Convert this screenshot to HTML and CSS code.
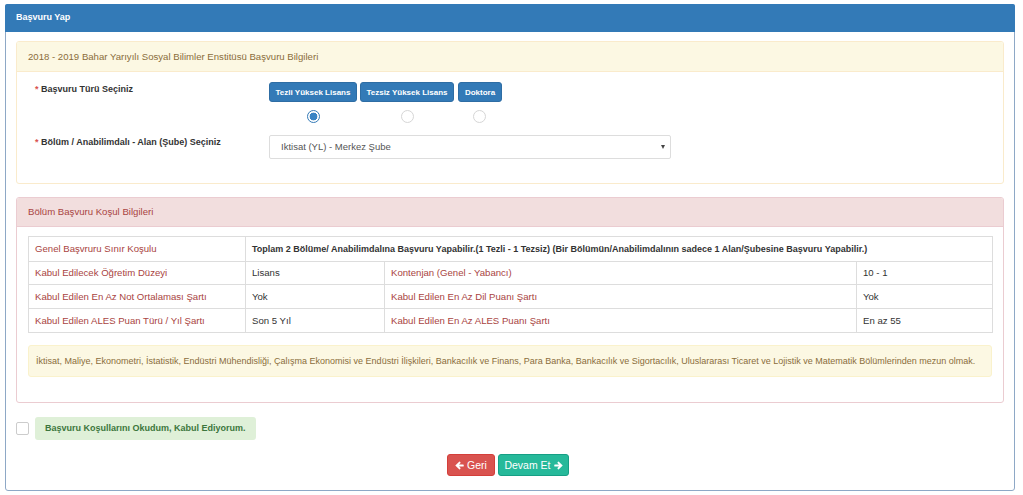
FILE: index.html
```html
<!DOCTYPE html>
<html lang="tr">
<head>
<meta charset="utf-8">
<title>Başvuru Yap</title>
<link rel="stylesheet" href="styles.css">
</head>
<body>
<div class="panel panel-primary">
  <div class="panel-heading">Başvuru Yap</div>
  <div class="panel-body main">
    <div class="panel panel-warning">
      <div class="panel-heading">2018 - 2019 Bahar Yarıyılı Sosyal Bilimler Enstitüsü Başvuru Bilgileri</div>
      <div class="panel-body form">
        <div class="form-row">
          <label class="control-label"><span class="req">*</span> Başvuru Türü Seçiniz</label>
          <div class="types">
            <div class="type t1">
              <button class="btn btn-primary btn-xs">Tezli Yüksek Lisans</button>
              <span class="radio checked"></span>
            </div>
            <div class="type t2">
              <button class="btn btn-primary btn-xs">Tezsiz Yüksek Lisans</button>
              <span class="radio"></span>
            </div>
            <div class="type t3">
              <button class="btn btn-primary btn-xs">Doktora</button>
              <span class="radio"></span>
            </div>
          </div>
        </div>
        <div class="form-row">
          <label class="control-label"><span class="req">*</span> Bölüm / Anabilimdalı - Alan (Şube) Seçiniz</label>
          <div class="select"><span>Iktisat (YL) - Merkez Şube</span><span class="caret"></span></div>
        </div>
      </div>
    </div>

    <div class="panel panel-danger">
      <div class="panel-heading">Bölüm Başvuru Koşul Bilgileri</div>
      <div class="panel-body">
        <table class="table">
          <colgroup><col class="c1"><col class="c2"><col class="c3"><col class="c4"></colgroup>
          <tr class="r1"><th>Genel Başvruru Sınır Koşulu</th><td colspan="3" class="strong">Toplam 2 Bölüme/ Anabilimdalına Başvuru Yapabilir.(1 Tezli - 1 Tezsiz) (Bir Bölümün/Anabilimdalının sadece 1 Alan/Şubesine Başvuru Yapabilir.)</td></tr>
          <tr class="r2"><th>Kabul Edilecek Öğretim Düzeyi</th><td>Lisans</td><th>Kontenjan (Genel - Yabancı)</th><td>10 - 1</td></tr>
          <tr><th>Kabul Edilen En Az Not Ortalaması Şartı</th><td>Yok</td><th>Kabul Edilen En Az Dil Puanı Şartı</th><td>Yok</td></tr>
          <tr><th>Kabul Edilen ALES Puan Türü / Yıl Şartı</th><td>Son 5 Yıl</td><th>Kabul Edilen En Az ALES Puanı Şartı</th><td>En az 55</td></tr>
        </table>
        <div class="well">İktisat, Maliye, Ekonometri, İstatistik, Endüstri Mühendisliği, Çalışma Ekonomisi ve Endüstri İlişkileri, Bankacılık ve Finans, Para Banka, Bankacılık ve Sigortacılık, Uluslararası Ticaret ve Lojistik ve Matematik Bölümlerinden mezun olmak.</div>
      </div>
    </div>

    <div class="accept">
      <span class="checkbox"></span>
      <div class="alert-success">Başvuru Koşullarını Okudum, Kabul Ediyorum.</div>
    </div>

    <div class="actions">
      <button class="btn btn-danger"><svg class="ico" viewBox="0 0 10 10"><path d="M0.3 5 L4.6 0.9 Q5.3 0.4 5.8 1 L6 1.3 Q6.4 1.9 5.9 2.4 L4.4 3.8 H9 Q9.7 3.8 9.7 4.5 V5.5 Q9.7 6.2 9 6.2 H4.4 L5.9 7.6 Q6.4 8.1 6 8.7 L5.8 9 Q5.3 9.6 4.6 9.1 Z"/></svg>Geri</button>
      <button class="btn btn-success">Devam Et<svg class="ico right" viewBox="0 0 10 10"><path d="M9.7 5 L5.4 0.9 Q4.7 0.4 4.2 1 L4 1.3 Q3.6 1.9 4.1 2.4 L5.6 3.8 H1 Q0.3 3.8 0.3 4.5 V5.5 Q0.3 6.2 1 6.2 H5.6 L4.1 7.6 Q3.6 8.1 4 8.7 L4.2 9 Q4.7 9.6 5.4 9.1 Z"/></svg></button>
    </div>
  </div>
</div>
</body>
</html>
```

FILE: styles.css
```css
* { box-sizing: border-box; }
html, body { margin: 0; padding: 0; background: #fff; }
body {
  font-family: "Liberation Sans", Arial, sans-serif;
  font-size: 9.6px;
  line-height: 1.42857;
  color: #333;
}
.panel {
  background: #fff;
  border: 1px solid transparent;
  border-radius: 3px;
}
.panel-heading {
  border-bottom: 1px solid transparent;
  border-radius: 2px 2px 0 0;
}
.panel-primary {
  margin: 4px 0 0 5px;
  width: 1010px;
  border-color: #8ea8c6;
}
.panel-primary > .panel-heading {
  background: #337ab7;
  border-color: #337ab7;
  color: #fff;
  font-weight: bold;
  font-size: 9px;
  height: 28px;
  padding: 0 11px;
  display: flex;
  align-items: center;
  margin: -1px -1px 0;
}
.main { padding: 9px 10px 14px; }

.panel-warning { border-color: #faebcc; }
.panel-warning > .panel-heading {
  background: #fcf8e3;
  color: #8a6d3b;
  border-color: #faebcc;
  height: 30px;
  padding: 0 11px;
  display: flex;
  align-items: center;
}
.panel-danger { border-color: #ebccd1; margin-top: 13px; }
.panel-danger > .panel-heading {
  background: #f2dede;
  color: #a94442;
  border-color: #ebccd1;
  height: 29px;
  padding: 0 11px;
  display: flex;
  align-items: center;
}

.form { padding: 10px 12px 24px 18px; }
.form-row {
  display: grid;
  grid-template-columns: 234px 402px;
  align-items: start;
}
.form-row + .form-row { margin-top: 12px; }
.control-label { font-weight: bold; font-size: 9px; color: #333; padding-top: 1px; }
.req { color: #d9534f; }
.types { display: flex; gap: 3px; }
.type {
  display: flex;
  flex-direction: column;
  align-items: center;
  gap: 8px;
}
.t1 .btn { width: 88px; }
.t2 .btn { width: 94px; }
.t3 .btn { width: 44px; margin-left: 1px; }
.btn {
  font-family: inherit;
  border: 1px solid transparent;
  border-radius: 3px;
  cursor: pointer;
  display: inline-flex;
  align-items: center;
  justify-content: center;
  padding: 0;
  color: #fff;
  white-space: nowrap;
}
.btn-xs {
  height: 20px;
  font-size: 8px;
  font-weight: bold;
}
.btn-primary { background: #337ab7; border-color: #2e6da4; }
.btn-danger { background: #d9534f; border-color: #d43f3a; }
.btn-success { background: #26b99a; border-color: #169f85; }
.radio {
  width: 13px;
  height: 13px;
  border-radius: 50%;
  border: 1px solid #d6d6d6;
  background: #fff;
}
.radio.checked {
  border-color: #337ab7;
  background: radial-gradient(circle, #3a84c4 0 3.6px, #fff 4.2px);
}
.select {
  height: 24px;
  border: 1px solid #ddd;
  border-radius: 2px;
  display: flex;
  align-items: center;
  justify-content: space-between;
  padding: 0 5px 0 11px;
  color: #555;
  font-size: 9.5px;
}
.caret {
  width: 0; height: 0;
  border-left: 2.5px solid transparent;
  border-right: 2.5px solid transparent;
  border-top: 4px solid #444;
}

.panel-danger > .panel-body { padding: 9px 11px 25px; }
.table {
  width: 100%;
  border-collapse: collapse;
  table-layout: fixed;
}
.c1 { width: 217px; }
.c2 { width: 139px; }
.c3 { width: 472px; }
.c4 { width: 136px; }
.table th, .table td {
  border: 1px solid #ddd;
  padding: 0 6px;
  height: 24px;
  text-align: left;
  font-weight: normal;
  white-space: nowrap;
}
.table th { color: #a94442; }
.table td { color: #333; }
.table td.strong { font-weight: bold; font-size: 9px; }
.table tr.r1 th, .table tr.r1 td { height: 25px; }
.table tr.r2 th, .table tr.r2 td { height: 23px; }
.well {
  margin-top: 12px;
  background: #fcf8e3;
  border: 1px solid #faf2cc;
  border-radius: 3px;
  color: #8a6d3b;
  height: 32px;
  padding: 0 7px;
  display: flex;
  align-items: center;
  font-size: 9px;
  white-space: nowrap;
}

.accept {
  display: flex;
  align-items: center;
  gap: 6px;
  margin-top: 14px;
}
.checkbox {
  width: 13px;
  height: 13px;
  border: 1px solid #ccc;
  border-radius: 2px;
  background: #fff;
}
.alert-success {
  background: #dff0d8;
  color: #3c763d;
  font-weight: bold;
  font-size: 9px;
  width: 221px;
  height: 23px;
  border-radius: 3px;
  padding: 0 10px;
  display: flex;
  align-items: center;
  white-space: nowrap;
}

.actions {
  display: flex;
  justify-content: center;
  gap: 3px;
  margin-top: 14px;
  padding-right: 4px;
}
.actions .btn {
  height: 22px;
  font-size: 10.5px;
  gap: 3px;
}
.btn-danger { width: 48px; }
.btn-success { width: 71px; }
.ico { width: 9px; height: 9px; fill: #fff; }
```
